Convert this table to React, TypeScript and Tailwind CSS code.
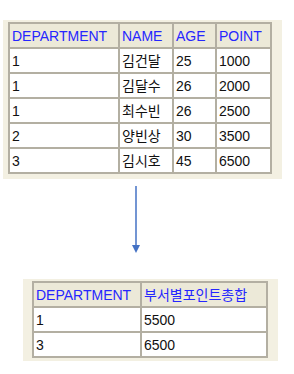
const font = { fontFamily: '"Liberation Sans", Arial, "Noto Sans CJK KR", sans-serif' };

type GridProps = {
  cols: string;
  header: string[];
  rows: string[][];
};

function Sheet({ cols, header, rows }: GridProps) {
  return (
    <div className={`grid ${cols} gap-[2px] bg-[#b3afa2] p-[2px] text-[14px] leading-none`}>
      {header.map((h) => (
        <div key={h} className="flex h-[23px] items-center bg-[#ece9d8] pt-[1px] pl-[2px] text-[#2626ff]">
          {h}
        </div>
      ))}
      {rows.map((row, i) =>
        row.map((cell, j) => (
          <div key={`${i}-${j}`} className="flex h-[23px] items-center bg-white pt-[1px] pl-[2px] text-[#111]">
            {cell}
          </div>
        )),
      )}
    </div>
  );
}

export default function App() {
  return (
    <div className="h-[374px] w-[294px] bg-white" style={font}>
      <div className="pt-[20px] pl-[3px]">
        <div className="w-[279px] bg-[#f3f0e2] pt-[2px] pr-[10px] pb-[5px] pl-[5px]">
          <Sheet
            cols="grid-cols-[108px_52px_41px_53px]"
            header={["DEPARTMENT", "NAME", "AGE", "POINT"]}
            rows={[
              ["1", "김건달", "25", "1000"],
              ["1", "김달수", "26", "2000"],
              ["1", "최수빈", "26", "2500"],
              ["2", "양빈상", "30", "3500"],
              ["3", "김시호", "45", "6500"],
            ]}
          />
        </div>
      </div>

      <div className="h-[100px] pl-[131px]">
        <svg width="10" height="100" viewBox="0 0 10 100">
          <line x1="5" y1="7" x2="5" y2="67" stroke="#4472c4" strokeWidth="1.5" />
          <polygon points="1,66 9,66 5,74" fill="#4472c4" />
        </svg>
      </div>

      <div className="pl-[23px]">
        <div className="w-[255px] bg-[#f3f0e2] pt-[2px] pr-[10px] pb-[3px] pl-[9px]">
          <Sheet
            cols="grid-cols-[106px_124px]"
            header={["DEPARTMENT", "부서별포인트총합"]}
            rows={[
              ["1", "5500"],
              ["3", "6500"],
            ]}
          />
        </div>
      </div>
    </div>
  );
}
